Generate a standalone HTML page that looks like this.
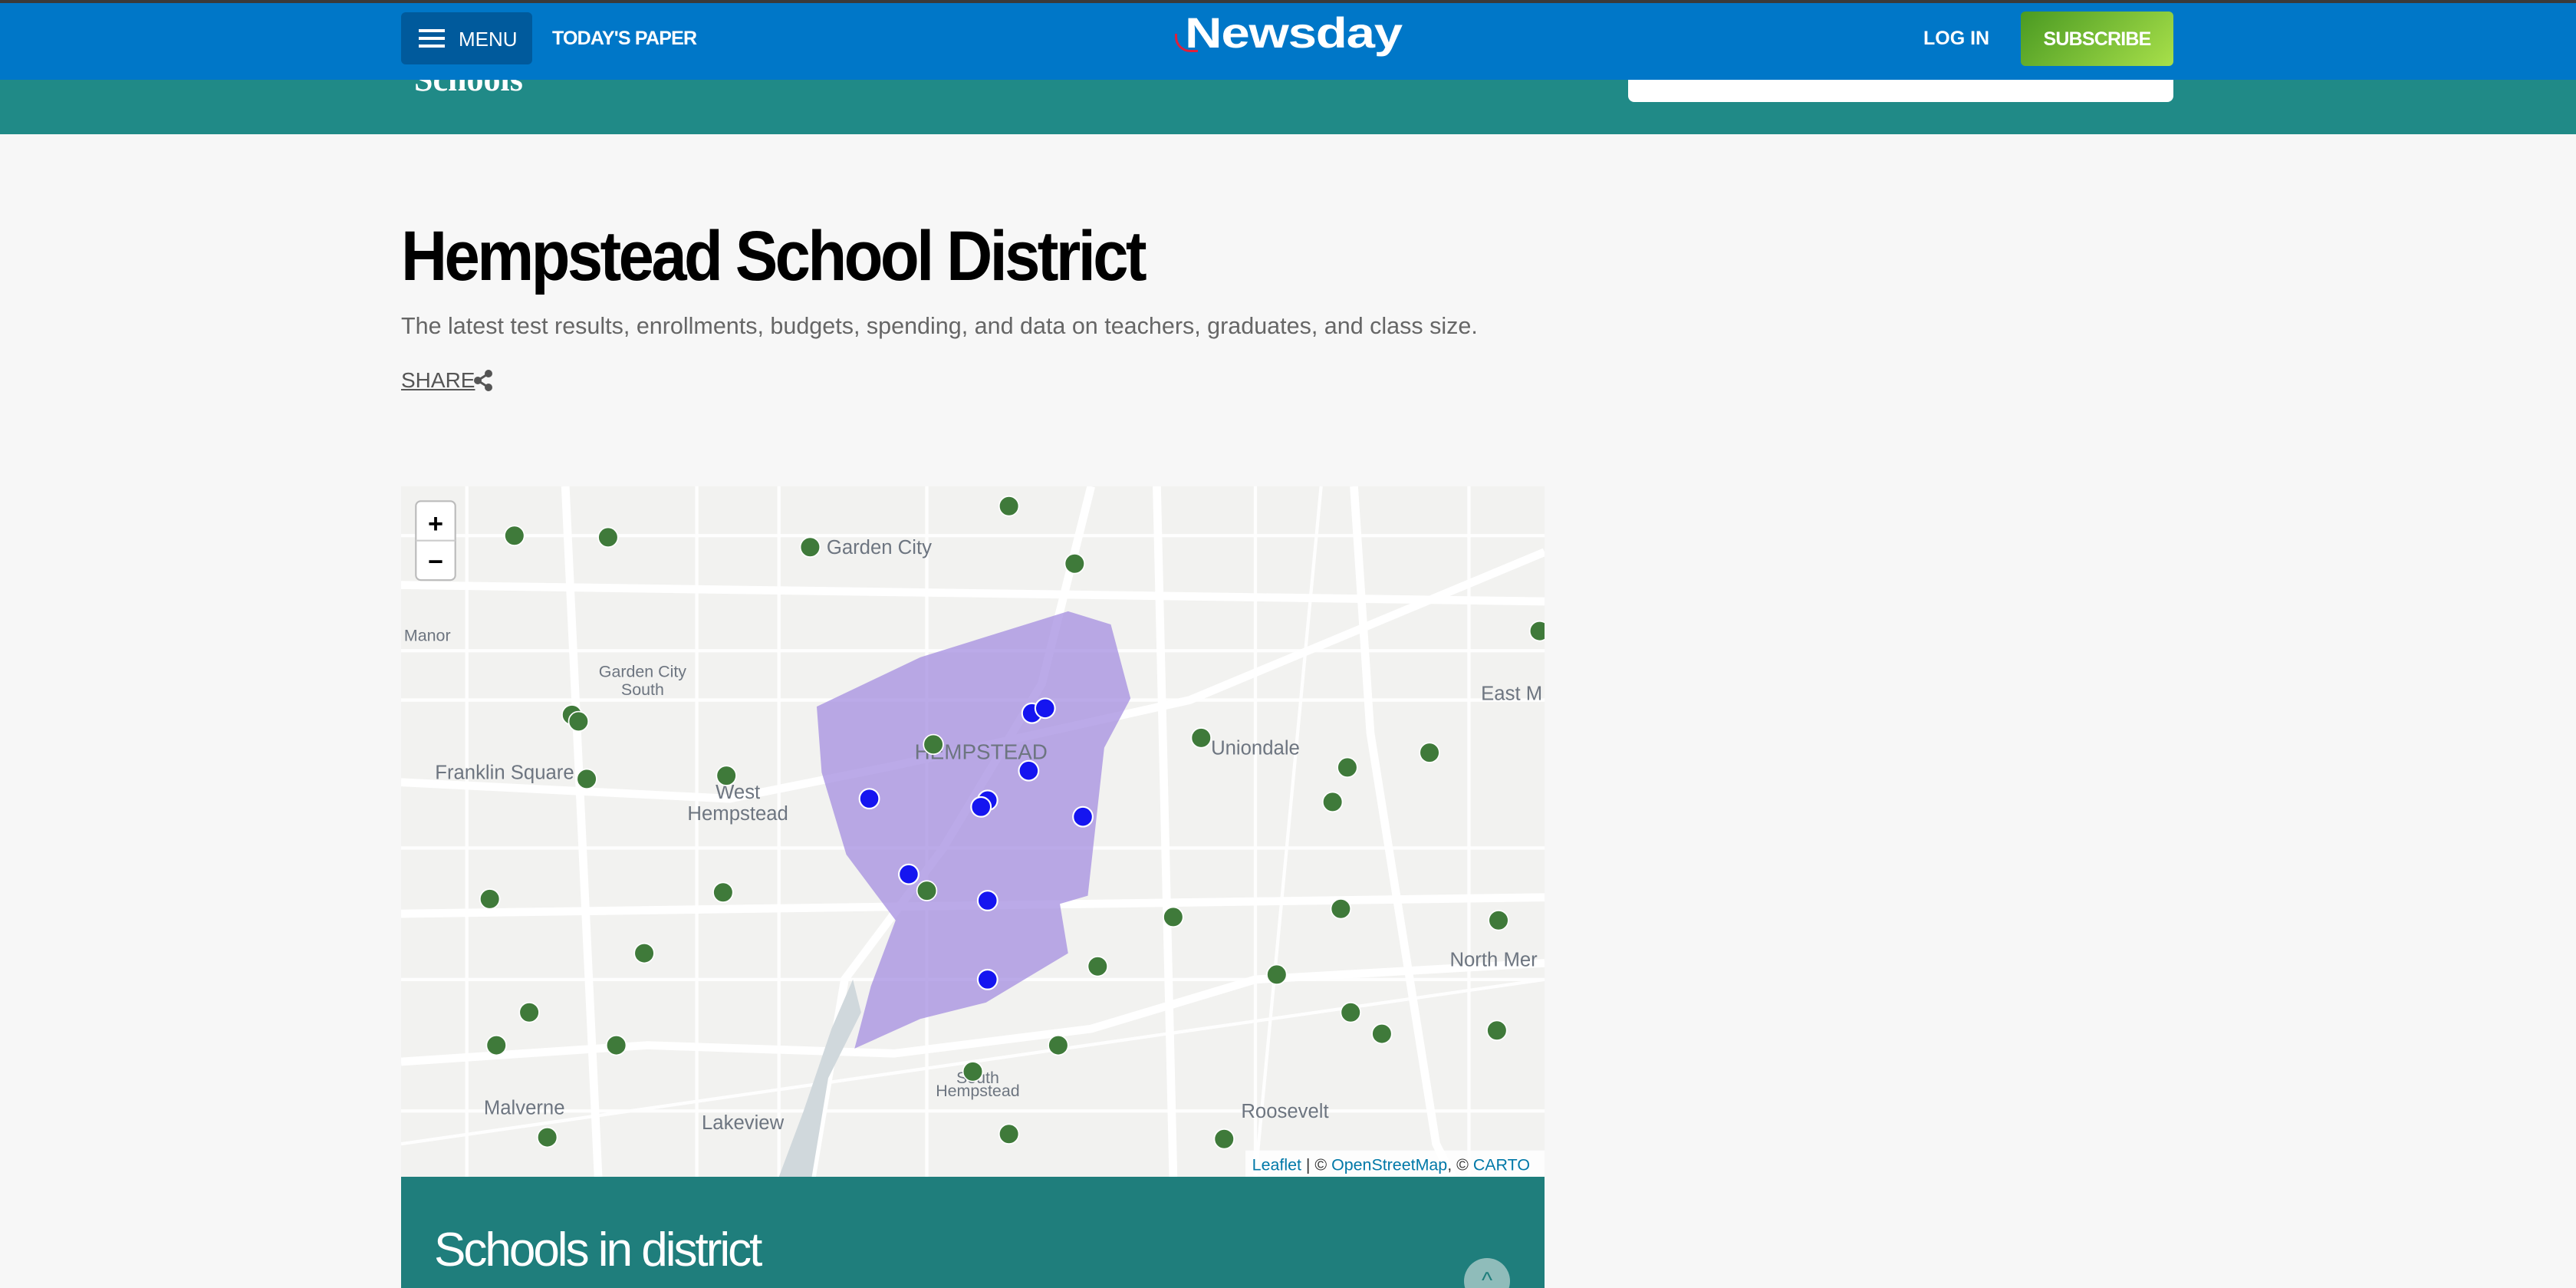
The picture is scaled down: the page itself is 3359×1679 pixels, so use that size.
<!DOCTYPE html>
<html><head><meta charset="utf-8"><style>
*{margin:0;padding:0;box-sizing:border-box}
html,body{width:3359px;height:1679px;overflow:hidden;background:#f7f7f7;font-family:"Liberation Sans",sans-serif;position:relative}
.abs{position:absolute}
</style></head><body>
<div class="abs" style="left:0;top:0;width:3359px;height:4px;background:#3a3a3a"></div>
<div class="abs" style="left:0;top:104px;width:3359px;height:71px;background:#208a87"></div>
<div class="abs" style="left:540px;top:78px;color:#fff;font-family:'Liberation Serif',serif;font-size:44px;font-weight:bold">Schools</div>
<div class="abs" style="left:2123px;top:90px;width:711px;height:43px;background:#fff;border-radius:0 0 8px 8px"></div>
<div class="abs" style="left:0;top:4px;width:3359px;height:100px;background:#0077c8"></div>
<div class="abs" style="left:523px;top:16px;width:171px;height:68px;background:#005a9c;border-radius:6px"></div>
<div class="abs" style="left:546px;top:38px;width:34px;height:4px;background:#fff;box-shadow:0 10px 0 #fff,0 20px 0 #fff"></div>
<div class="abs" style="left:598px;top:36px;color:#fff;font-size:26px">MENU</div>
<div class="abs" style="left:720px;top:36px;color:#fff;font-size:25px;font-weight:bold;letter-spacing:-0.8px">TODAY'S PAPER</div>
<div class="abs" style="left:1545px;top:10px;color:#fff;font-size:56px;font-weight:bold;letter-spacing:-1px;transform:scaleX(1.2);transform-origin:left;white-space:nowrap">Newsday</div>
<div class="abs" style="left:1532px;top:44px;width:30px;height:24px;border-left:3px solid #e0203a;border-bottom:3px solid #e0203a;border-radius:0 0 0 20px"></div>
<div class="abs" style="left:2508px;top:36px;color:#fff;font-size:25px;font-weight:bold">LOG IN</div>
<div class="abs" style="left:2635px;top:15px;width:199px;height:71px;border-radius:6px;background:linear-gradient(135deg,#4a9a22,#a8e04a)"></div>
<div class="abs" style="left:2635px;top:37px;width:199px;text-align:center;color:#fff;font-size:25px;font-weight:bold;letter-spacing:-0.8px">SUBSCRIBE</div>

<div class="abs" style="left:523px;top:282px;font-size:92px;font-weight:bold;color:#000;letter-spacing:-4px;transform:scaleX(0.905);transform-origin:left;white-space:nowrap">Hempstead School District</div>
<div class="abs" style="left:523px;top:408px;font-size:30.5px;color:#666;white-space:nowrap">The latest test results, enrollments, budgets, spending, and data on teachers, graduates, and class size.</div>
<div class="abs" style="left:523px;top:480px;font-size:28px;color:#555;text-decoration:underline">SHARE</div>
<svg class="abs" style="left:617px;top:482px" width="26" height="28" viewBox="0 0 26 28"><circle cx="20" cy="5" r="5" fill="#555"/><circle cx="6" cy="14" r="5" fill="#555"/><circle cx="20" cy="23" r="5" fill="#555"/><path d="M20 5L6 14L20 23" stroke="#555" stroke-width="3" fill="none"/></svg>

<svg class="abs" style="left:523px;top:634px" width="1491" height="900" viewBox="0 0 696 420" preserveAspectRatio="none">
<rect width="696" height="420" fill="#f2f2f0"/>
<g stroke="#fff" stroke-width="5" fill="none">
<path d="M0 180L200 190L300 170L480 130L696 40"/><path d="M0 350L150 340L300 345L420 330L520 300L696 290"/><path d="M580 0L590 150L630 400L640 420"/><path d="M250 420L270 300L330 220L390 120L420 0"/>
<path d="M0 60L696 70"/><path d="M100 0L120 420"/><path d="M460 0L470 420"/><path d="M0 260L696 250"/></g>
<g stroke="#fff" stroke-width="2" fill="none" opacity=".9">
<path d="M0 30H696M0 100H696M0 130H696M0 220H696M0 300H696M0 380H696M40 0V420M180 0V420M230 0V420M320 0V420M520 0V420M650 0V420M560 0L520 420M0 400L696 300"/></g>
<path d="M250 420L260 360L280 320L275 300L262 330L245 380L230 420Z" fill="#d0d8dc"/>
<path d="M253 134L316 104L406 76L432 84L444 129L428 159L418 249L401 254L406 284L356 314L316 324L276 342L286 304L301 264L271 224L256 174Z" fill="#a48ee0" opacity=".75"/>
<g font-family="Liberation Sans,sans-serif" fill="#6d7580" font-size="12" text-anchor="middle">
<text x="291" y="41">Garden City</text><text x="147" y="116" font-size="10">Garden City</text><text x="147" y="127" font-size="10">South</text>
<text x="16" y="94" font-size="10">Manor</text><text x="63" y="178">Franklin Square</text><text x="205" y="190">West</text><text x="205" y="203">Hempstead</text>
<text x="353" y="166" font-size="13">HEMPSTEAD</text><text x="520" y="163">Uniondale</text><text x="676" y="130">East M</text><text x="665" y="292">North Mer</text>
<text x="75" y="382">Malverne</text><text x="208" y="391">Lakeview</text><text x="351" y="363" font-size="10">South</text><text x="351" y="371" font-size="10">Hempstead</text><text x="538" y="384">Roosevelt</text></g>
<g fill="#3f7a3a" stroke="#fff" stroke-width="0.8">
<circle cx="69" cy="30" r="6"/><circle cx="126" cy="31" r="6"/><circle cx="249" cy="37" r="6"/><circle cx="370" cy="12" r="6"/><circle cx="410" cy="47" r="6"/><circle cx="104" cy="139" r="6"/><circle cx="108" cy="143" r="6"/><circle cx="113" cy="178" r="6"/><circle cx="198" cy="176" r="6"/><circle cx="324" cy="157" r="6"/><circle cx="487" cy="153" r="6"/><circle cx="576" cy="171" r="6"/><circle cx="626" cy="162" r="6"/><circle cx="567" cy="192" r="6"/><circle cx="54" cy="251" r="6"/><circle cx="196" cy="247" r="6"/><circle cx="320" cy="246" r="6"/><circle cx="148" cy="284" r="6"/><circle cx="470" cy="262" r="6"/><circle cx="572" cy="257" r="6"/><circle cx="668" cy="264" r="6"/><circle cx="78" cy="320" r="6"/><circle cx="58" cy="340" r="6"/><circle cx="131" cy="340" r="6"/><circle cx="424" cy="292" r="6"/><circle cx="533" cy="297" r="6"/><circle cx="578" cy="320" r="6"/><circle cx="597" cy="333" r="6"/><circle cx="667" cy="331" r="6"/><circle cx="400" cy="340" r="6"/><circle cx="348" cy="356" r="6"/><circle cx="370" cy="394" r="6"/><circle cx="89" cy="396" r="6"/><circle cx="501" cy="397" r="6"/><circle cx="693" cy="88" r="6"/></g>
<g fill="#1515f0" stroke="#fff" stroke-width="1">
<circle cx="384" cy="138" r="6"/><circle cx="392" cy="135" r="6"/><circle cx="382" cy="173" r="6"/><circle cx="285" cy="190" r="6"/><circle cx="357" cy="191" r="6"/><circle cx="353" cy="195" r="6"/><circle cx="415" cy="201" r="6"/><circle cx="309" cy="236" r="6"/><circle cx="357" cy="252" r="6"/><circle cx="357" cy="300" r="6"/></g>
<rect x="9" y="9" width="24" height="48" rx="3" fill="#fff" stroke="#bbb"/><line x1="9" y1="33" x2="33" y2="33" stroke="#ccc"/>
<text x="21" y="28" text-anchor="middle" font-family="Liberation Sans,sans-serif" font-weight="bold" font-size="16" fill="#000">+</text>
<text x="21" y="51" text-anchor="middle" font-family="Liberation Sans,sans-serif" font-weight="bold" font-size="16" fill="#000">−</text>
<rect x="514" y="404" width="182" height="16" fill="#fff" opacity=".85"/>
<text x="518" y="416" font-family="Liberation Sans,sans-serif" font-size="10" fill="#0078a8">Leaflet <tspan fill="#333">| ©</tspan> OpenStreetMap<tspan fill="#333">, ©</tspan> CARTO</text>
</svg>

<div class="abs" style="left:523px;top:1534px;width:1491px;height:145px;background:#1f7e7c"></div>
<div class="abs" style="left:566px;top:1594px;color:#fff;font-size:62px;letter-spacing:-3px">Schools in district</div>
<div class="abs" style="left:1909px;top:1640px;width:60px;height:60px;border-radius:50%;background:#8fbcba;color:#1f7e7c;text-align:center;font-size:30px;line-height:60px">^</div>
</body></html>
